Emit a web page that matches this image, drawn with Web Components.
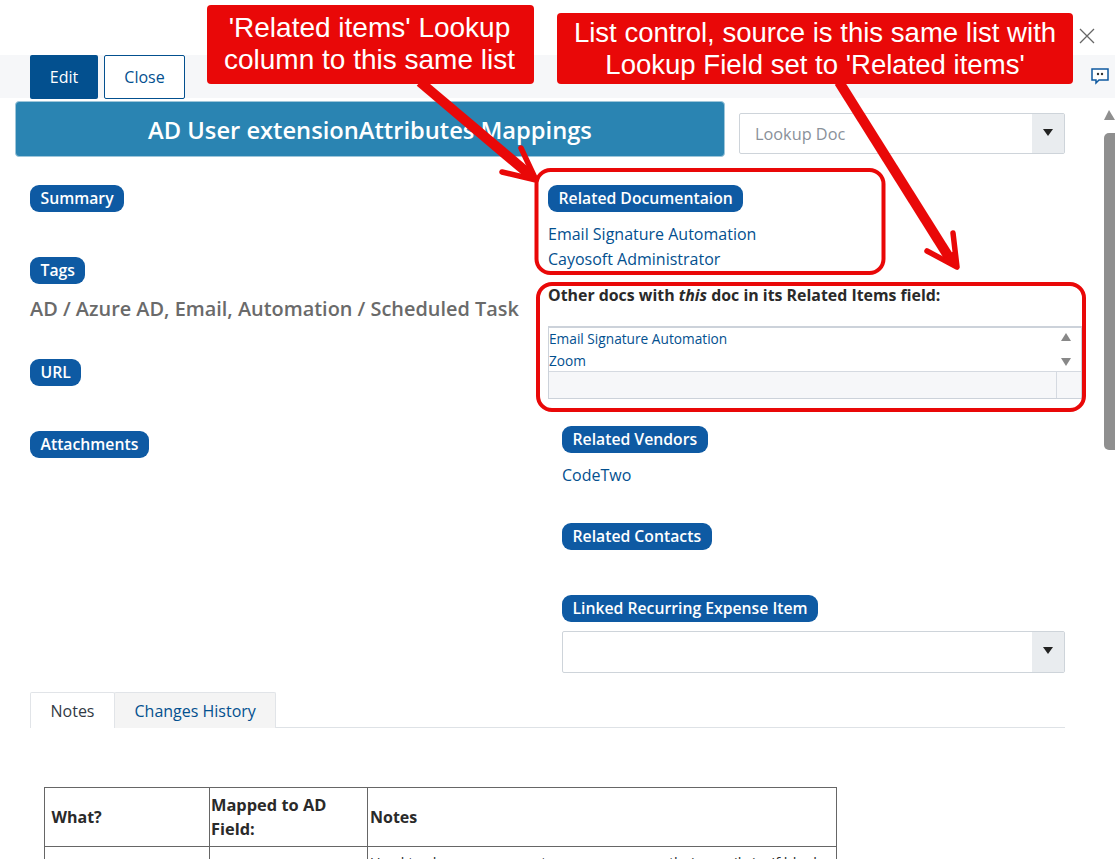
<!DOCTYPE html>
<html><head><meta charset="utf-8"><style>
html,body{margin:0;padding:0;height:859px;overflow:hidden;background:#fff}
body{font-family:"Open Sans","Noto Sans",sans-serif;color:#323a45}
</style></head><body>
<template id="t-page"><style>
:host{display:flex;flex-direction:column;width:1115px;height:859px;overflow:hidden;position:relative;background:#fff}
.top{height:55px;flex:none;display:flex;justify-content:flex-end}
.x{margin:27px 19px 0 0;width:18px;height:18px}
.bar{height:43px;flex:none;background:#f6f7f9;display:flex;align-items:flex-start;padding-left:30px;gap:6px;box-sizing:border-box}
.chat{margin:12px 5px 0 auto;width:20px;height:18px}
.rest{flex:1;display:flex;min-height:0}
.main{flex:1;min-width:0;overflow:hidden}
.sb{width:11px;flex:none;display:flex;flex-direction:column;align-items:stretch;padding-top:12px}
.up{width:0;height:0;border-left:5px solid transparent;border-right:6px solid transparent;border-bottom:10px solid #8f8f8f;margin-bottom:13px}
.th{height:317px;background:#8f8f8f;border-radius:5px 0 0 5px}
</style>
<div class="top"><svg class="x" viewBox="0 0 18 18"><path d="M2 2 16 16M16 2 2 16" stroke="#666" stroke-width="1.3" fill="none"/></svg></div>
<div class="bar"><slot name="bar"></slot>
<svg class="chat" viewBox="0 0 20 18"><path d="M2 2H18V13H9L6 16V13H2Z" fill="#fff" stroke="#0f5aa0" stroke-width="1.5"/><circle cx="8" cy="7" r="1.2" fill="#333"/><circle cx="12" cy="7" r="1.2" fill="#333"/></svg></div>
<div class="rest"><div class="main"><slot></slot></div><div class="sb"><div class="up"></div><div class="th"></div></div></div>
<slot name="over"></slot></template>

<template id="t-btn"><style>
:host{display:flex;align-items:center;justify-content:center;box-sizing:border-box;height:44px;border-radius:2px;font-size:16px}
:host([primary]){background:#03508f;color:#fff;width:68px}
:host(:not([primary])){background:#fff;color:#03508f;border:1px solid #03508f;width:81px}
</style><slot></slot></template>

<template id="t-pill"><style>
:host{display:inline-block;background:#0e5aa3;color:#fff;font-weight:600;font-size:15.75px;line-height:27px;height:27px;padding:0 10.5px;border-radius:9px;white-space:nowrap}
</style><slot></slot></template>

<template id="t-select"><style>
:host{display:flex;box-sizing:border-box;border:1px solid #ced4da;border-radius:2px;background:#fff;color:#8a919a;font-size:16.3px;align-items:stretch}
.v{flex:1;padding-left:15px;display:flex;align-items:center}
.a{width:32px;background:#e9ecef;display:flex;align-items:center;justify-content:center;padding-bottom:3px}
.a i{display:block;width:0;height:0;border-left:5px solid transparent;border-right:5px solid transparent;border-top:7px solid #222}
</style><div class="v"><slot></slot></div><div class="a"><i></i></div></template>

<template id="t-list"><style>
:host{display:block;box-sizing:border-box;height:73px;border:1px solid #ccd2da;border-top-width:2px;font-size:13.7px;color:#03508f;width:534px}
.b{display:flex;height:43px;border-bottom:1px solid #d5dae1;box-sizing:content-box}
.it{flex:1;line-height:22px;padding-left:0}
.sc{width:25px;padding:5px 5px 5px 0;display:flex;flex-direction:column;justify-content:space-between;align-items:center;box-sizing:border-box}
.u,.d{width:0;height:0;border-left:5px solid transparent;border-right:5px solid transparent}
.u{border-bottom:8px solid #888}.d{border-top:8px solid #888}
.f{display:flex;height:26px;background:#f6f7f9}.f div:first-child{flex:1;border-right:1px solid #d5dae1}.f div:last-child{width:24px}
</style><div class="b"><div class="it"><slot></slot></div><div class="sc"><div class="u"></div><div class="d"></div></div></div><div class="f"><div></div><div></div></div></template>

<template id="t-tabs"><style>
:host{display:flex;border-bottom:1px solid #dee2e6;height:36px;box-sizing:border-box;font-size:16px}
div{display:flex;align-items:center;padding:0 19.5px;height:36px;box-sizing:border-box;border:1px solid #e1e4e8;border-bottom:0;border-radius:2px 2px 0 0}
.a{background:#fff;color:#323a45}.b{background:#f4f4f4;color:#03508f;margin-left:-1px}
</style><div class="a">Notes</div><div class="b">Changes History</div></template>

<template id="t-call"><style>
:host{display:block;position:absolute;box-sizing:border-box;background:#e90808;color:#fff;border-radius:4px;font-family:"Liberation Sans",Arial,sans-serif;font-size:28px;line-height:32px;text-align:center;padding-top:7px}
</style><slot></slot></template>

<template id="t-form"><style>
:host{display:block;padding:3px 0 0 15px;box-sizing:border-box;width:1065px}
.tr{display:flex;gap:14px;align-items:flex-start}
.title{flex:none;width:710px;height:56px;padding-top:2px;box-sizing:border-box;background:#2a84b2;border:1px solid #9ec6da;border-radius:4px;color:#fff;font-weight:600;font-size:23.7px;display:flex;align-items:center;justify-content:center}
.look{margin-top:12px;height:41px;width:326px;flex:none}
.cols{display:flex;margin-top:28px;padding-left:15px}
.l{width:518px;flex:none}
.r{flex:1;min-width:0}
.tags{font-size:19.9px;font-weight:600;color:#6a6a6a;margin-top:11px;line-height:28px;white-space:nowrap}
a{display:block;color:#03508f;text-decoration:none;font-size:16px;line-height:25px}
.o{font-weight:700;font-size:15.9px;color:#2a2a2a;line-height:20px;margin-top:13px;white-space:nowrap}
.ind{padding-left:14px}
.sel{display:flex;height:42px;width:503px;margin-top:9px}
.tabs{margin:19px 0 0 15px;width:1035px}
table{border-collapse:collapse;margin:59px 0 0 29px;table-layout:fixed;width:792px;font-size:16px;color:#2a2a2a}
td{border:1px solid #666;padding:0 6.5px;vertical-align:middle;line-height:24px;box-sizing:border-box}
td.h{font-weight:700}
td.h2{padding-left:2px}
td.m{padding-left:1px;font-size:16.4px}
.small td{height:40px;vertical-align:top;line-height:20px;font-size:14.5px;padding:6px 2px 0}
</style>
<div class="tr"><div class="title">AD User extensionAttributes Mappings</div><x-select class="look">Lookup Doc</x-select></div>
<div class="cols"><div class="l">
<x-pill>Summary</x-pill>
<div style="height:45px"></div><x-pill>Tags</x-pill>
<div class="tags">AD / Azure AD, Email, Automation / Scheduled Task</div>
<div style="height:36px"></div><x-pill>URL</x-pill>
<div style="height:45px"></div><x-pill>Attachments</x-pill>
</div><div class="r">
<x-pill>Related Documentaion</x-pill>
<div style="height:10px"></div><a>Email Signature Automation</a><a>Cayosoft Administrator</a>
<div class="o">Other docs with <i>this</i> doc in its Related Items field:</div>
<div style="height:21px"></div><x-list><div>Email Signature Automation</div><div>Zoom</div></x-list>
<div class="ind"><div style="height:27px"></div><x-pill>Related Vendors</x-pill>
<div style="height:10px"></div><a>CodeTwo</a>
<div style="height:35px"></div><x-pill>Related Contacts</x-pill>
<div style="height:45px"></div><x-pill>Linked Recurring Expense Item</x-pill>
<x-select class="sel"></x-select></div>
</div></div>
<x-tabs class="tabs"></x-tabs>
<table><colgroup><col style="width:165px"><col style="width:158px"><col style="width:469px"></colgroup>
<tr style="height:59px"><td class="h">What?</td><td class="h m">Mapped to AD Field:</td><td class="h h2">Notes</td></tr>
<tr class="small"><td></td><td></td><td>Used to show a user mentor or manager on their email sig. If blank</td></tr></table>
</template>

<x-page>
<x-btn slot="bar" primary>Edit</x-btn><x-btn slot="bar">Close</x-btn>
<x-form></x-form>
<svg slot="over" style="position:absolute;left:0;top:0;pointer-events:none" width="1115" height="859" viewBox="0 0 1115 859">
<g fill="none" stroke="#e90808" stroke-width="4">
<rect x="536.5" y="170" width="347" height="103" rx="14"/>
<rect x="538" y="284" width="546" height="126" rx="14"/></g>
<g fill="#e90808" stroke="#e90808" stroke-linecap="round" stroke-linejoin="round">
<path d="M420 82 530 175" stroke-width="10" stroke-linecap="butt" fill="none"/>
<path d="M502 172 536 180 521 148" stroke-width="5.5" fill="none"/>
<polygon points="537,181 519.5,176.5 529,164.5" stroke-width="1"/>
<path d="M839 82 952 262" stroke-width="10" stroke-linecap="butt" fill="none"/>
<path d="M927 251 957 267 953 233" stroke-width="5.5" fill="none"/>
<polygon points="958,268 942.5,259.5 955.5,250.5" stroke-width="1"/></g></svg>
<x-call slot="over" style="left:207px;top:5px;width:327px;height:79px;padding-right:2px">'Related items' Lookup<br>column to this same list</x-call>
<x-call slot="over" style="left:557px;top:13px;width:516px;height:71px;padding-top:4px;font-size:27.55px">List control, source is this same list with<br>Lookup Field set to 'Related items'</x-call>
</x-page>
<script>
const reg=(n,t)=>customElements.define(n,class extends HTMLElement{constructor(){super();this.attachShadow({mode:'open'}).appendChild(document.getElementById(t).content.cloneNode(true))}});
[['x-page','t-page'],['x-btn','t-btn'],['x-pill','t-pill'],['x-select','t-select'],['x-list','t-list'],['x-tabs','t-tabs'],['x-call','t-call'],['x-form','t-form']].forEach(a=>reg(...a));
</script></body></html>
